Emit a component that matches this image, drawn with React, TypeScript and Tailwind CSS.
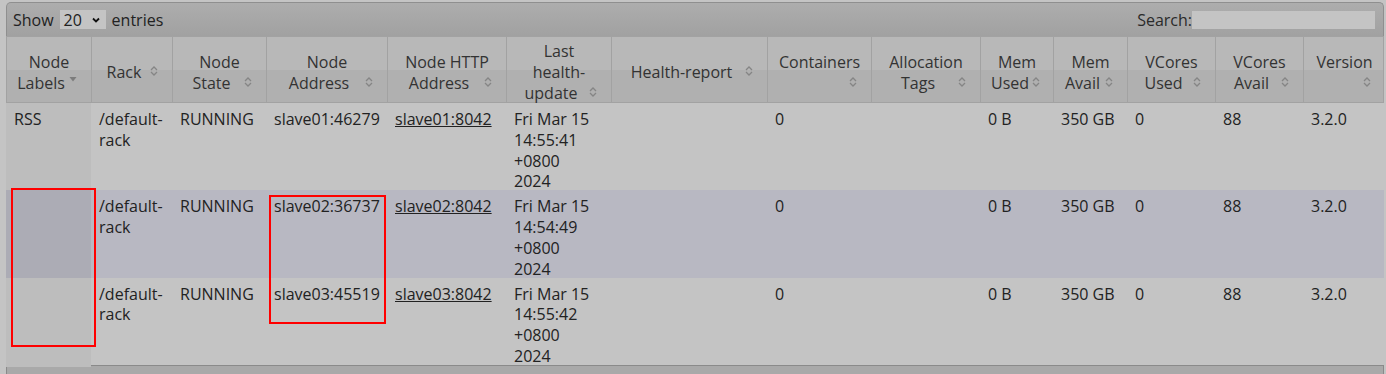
import React from "react"

type Head = { lines: string[]; sorted?: boolean }

const HEADS: Head[] = [
  { lines: ["Node", "Labels"], sorted: true },
  { lines: ["Rack"] },
  { lines: ["Node", "State"] },
  { lines: ["Node", "Address"] },
  { lines: ["Node HTTP", "Address"] },
  { lines: ["Last", "health-", "update"] },
  { lines: ["Health-report"] },
  { lines: ["Containers", ""] },
  { lines: ["Allocation", "Tags"] },
  { lines: ["Mem", "Used"] },
  { lines: ["Mem", "Avail"] },
  { lines: ["VCores", "Used"] },
  { lines: ["VCores", "Avail"] },
  { lines: ["Version", ""] },
]

const ROWS = [
  { label: "RSS", addr: "slave01:46279", http: "slave01:8042", time: "14:55:41" },
  { label: "", addr: "slave02:36737", http: "slave02:8042", time: "14:54:49" },
  { label: "", addr: "slave03:45519", http: "slave03:8042", time: "14:55:42" },
]

const GRID =
  "grid grid-cols-[85px_81px_94px_121px_119px_105px_156px_104px_109px_73px_74px_88px_88px_81px]"

function SortIcon() {
  return (
    <svg width="8" height="10" viewBox="0 0 8 10" className="mb-[2px]">
      <path d="M1 4 L4 1 L7 4 M1 6 L4 9 L7 6" fill="none" stroke="#858585" strokeWidth="1.3" />
    </svg>
  )
}

function SortedIcon() {
  return (
    <svg width="8" height="5" viewBox="0 0 8 5" className="mb-[6px]">
      <polygon points="0.5,0 7.5,0 4,4.5" fill="#7c7c7c" />
    </svg>
  )
}

function HeaderCell({ head, last }: { head: Head; last: boolean }) {
  const rest = head.lines.slice(0, -1)
  const tail = head.lines[head.lines.length - 1]
  return (
    <div
      className={`flex h-[65px] flex-col justify-center px-[10px] pt-[6px] text-center leading-[20.8px] ${
        last ? "" : "border-r border-[#a2a2a2]"
      }`}
    >
      {rest.map((l) => (
        <div key={l} className="whitespace-nowrap">
          {l}
        </div>
      ))}
      <div className="flex h-[20.8px] items-center">
        <span className="flex-1 whitespace-nowrap">{tail}</span>
        <span className="flex w-4 justify-center">{head.sorted ? <SortedIcon /> : <SortIcon />}</span>
      </div>
    </div>
  )
}

function Cell({ lines, sorted, even, link }: { lines: string[]; sorted?: boolean; even: boolean; link?: boolean }) {
  const bg = sorted ? (even ? "bg-[#acacb5]" : "bg-[#bdbdbd]") : ""
  return (
    <div className={`px-2 pt-[6px] leading-[20.8px] ${bg}`}>
      {lines.map((l, i) => (
        <div key={i} className={`whitespace-nowrap ${link ? "underline" : ""}`}>
          {l}
        </div>
      ))}
    </div>
  )
}

export default function App() {
  return (
    <div className="relative h-[374px] w-[1386px] overflow-hidden bg-[#c4c4c4] pl-[6px] pr-[2px] pt-[2px] font-['Open_Sans',sans-serif] text-[16px] text-[#222]">
      <div className="flex h-[34px] items-center justify-between rounded-t-[5px] border-x border-t border-[#8f8f8f] bg-[linear-gradient(to_bottom,#adadad,#a1a1a1)] pl-[6px] pr-[8px]">
        <div className="flex items-center">
          <span>Show</span>
          <div className="ml-[6px] mr-[6px] flex h-[19px] w-[46px] items-center justify-between bg-[#c4c4c4] pl-[4px] pr-[6px]">
            <span className="leading-none">20</span>
            <svg width="8" height="6" viewBox="0 0 8 6">
              <path d="M1 1.5 L4 4.5 L7 1.5" fill="none" stroke="#111" strokeWidth="1.8" />
            </svg>
          </div>
          <span>entries</span>
        </div>
        <div className="flex items-center">
          <span className="text-[#2a2a2a]">Search:</span>
          <div className="h-[18px] w-[183px] bg-[#c4c4c4]" />
        </div>
      </div>

      <div
        className={`${GRID} border-x border-b border-t border-[#a2a2a2] bg-[linear-gradient(to_bottom,#b8b8b8_50%,#b0b0b0_50%)] text-[#333]`}
      >
        {HEADS.map((h, i) => (
          <HeaderCell key={i} head={h} last={i === HEADS.length - 1} />
        ))}
      </div>

      {ROWS.map((r, idx) => {
        const even = idx === 1
        return (
          <div key={idx} className={`${GRID} h-[87.3px] ${even ? "bg-[#b8b8c2]" : "bg-[#c4c4c4]"}`}>
            <Cell lines={[r.label]} sorted even={even} />
            <Cell lines={["/default-", "rack"]} even={even} />
            <Cell lines={["RUNNING"]} even={even} />
            <Cell lines={[r.addr]} even={even} />
            <Cell lines={[r.http]} even={even} link />
            <Cell lines={["Fri Mar 15", r.time, "+0800", "2024"]} even={even} />
            <Cell lines={[""]} even={even} />
            <Cell lines={["0"]} even={even} />
            <Cell lines={[""]} even={even} />
            <Cell lines={["0 B"]} even={even} />
            <Cell lines={["350 GB"]} even={even} />
            <Cell lines={["0"]} even={even} />
            <Cell lines={["88"]} even={even} />
            <Cell lines={["3.2.0"]} even={even} />
          </div>
        )
      })}

      <div className="h-[20px] border-x border-t border-[#8a8a8a] bg-[#a9a9a9]" />

      <div className="absolute left-[11px] top-[188px] h-[159px] w-[85px] border-2 border-[#ff0000]" />
      <div className="absolute left-[269px] top-[195px] h-[129px] w-[117px] border-2 border-[#ff0000]" />
    </div>
  )
}
